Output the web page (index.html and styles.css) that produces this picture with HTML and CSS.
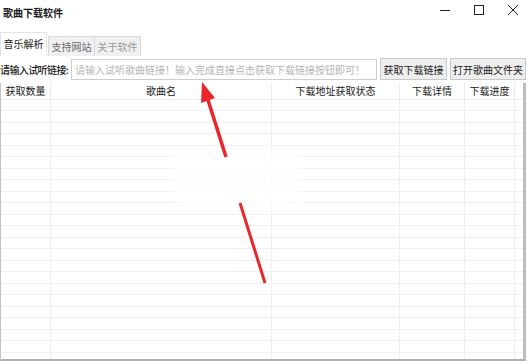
FILE: index.html
```html
<!DOCTYPE html>
<html lang="zh-CN">
<head>
    <meta charset="UTF-8">
    <title>歌曲下载软件</title>
    <link rel="stylesheet" href="styles.css">
</head>
<body>
    <div class="window">
        <div class="titlebar">
            <span class="title">歌曲下载软件</span>
            <div class="controls">
                <svg class="ctl" width="30" height="20" viewBox="0 0 30 20"><line x1="10" y1="10.5" x2="20" y2="10.5" stroke="#222" stroke-width="1"/></svg>
                <svg class="ctl" width="30" height="20" viewBox="0 0 30 20"><rect x="10.5" y="5.5" width="9" height="9" fill="none" stroke="#222" stroke-width="1"/></svg>
                <svg class="ctl" width="30" height="20" viewBox="0 0 30 20"><path d="M10 5 L20 15 M20 5 L10 15" stroke="#222" stroke-width="1"/></svg>
            </div>
        </div>

        <div class="tabs">
            <div class="tab active">音乐解析</div>
            <div class="tab">支持网站</div>
            <div class="tab dim">关于软件</div>
        </div>

        <div class="toolbar">
            <label class="label">请输入试听链接:</label>
            <input class="url" type="text" placeholder="请输入试听歌曲链接！输入完成直接点击获取下载链接按钮即可！">
            <button class="btn get">获取下载链接</button>
            <button class="btn open">打开歌曲文件夹</button>
        </div>

        <div class="grid">
            <div class="head">
                <div class="c1">获取数量</div>
                <div class="c2">歌曲名</div>
                <div class="c3">下载地址获取状态</div>
                <div class="c4">下载详情</div>
                <div class="c5">下载进度</div>
                <div class="rest"></div>
            </div>
            <div class="rows">
                <div class="c1"></div>
                <div class="c2"></div>
                <div class="c3"></div>
                <div class="c4"></div>
                <div class="c5"></div>
                <div class="rest"></div>
            </div>
        </div>

        <!-- 模糊处理的水印 -->
        <div class="smudge"></div>

        <!-- 红色指示箭头 -->
        <svg class="arrow" width="530" height="363" viewBox="0 0 530 363">
            <line x1="208" y1="100" x2="226" y2="157" stroke="#e8262a" stroke-width="3.5"/>
            <line x1="240" y1="203" x2="265" y2="283" stroke="#e8262a" stroke-width="3"/>
            <polygon points="202,82 215,98 201,103" fill="#e8262a"/>
        </svg>
    </div>
</body>
</html>
```

FILE: styles.css
```css
body {
    margin: 0;
    font-family: "Noto Sans CJK SC", "Microsoft YaHei", sans-serif;
    font-size: 10px;
    color: #1a1a1a;
    background: #fff;
    overflow: hidden;
}
.window {
    position: relative;
    width: 530px;
    height: 363px;
}
.titlebar {
    height: 24px;
    display: flex;
    align-items: center;
    padding-left: 3px;
}
.title {
    font-weight: bold;
    font-size: 10px;
}
.controls {
    margin-left: auto;
    display: flex;
    align-items: center;
    gap: 4px;
    margin-right: 2px;
    margin-top: -4px;
}
.tabs {
    margin-top: 9px;
    height: 23px;
    display: flex;
    align-items: flex-end;
}
.tab {
    width: 45px;
    height: 19px;
    line-height: 19px;
    text-align: center;
    background: #f0f0f0;
    border: 1px solid #d9d9d9;
    border-bottom: none;
    color: #6a6a6a;
    margin-left: -1px;
}
.tab.dim {
    color: #9a9a9a;
}
.tab.active {
    height: 23px;
    line-height: 22px;
    margin-left: 0;
    background: #fff;
    color: #1a1a1a;
    border-color: #e4e4e4;
    z-index: 1;
    margin-right: 2px;
}
.toolbar {
    margin-top: 1px;
    height: 24px;
    display: flex;
    align-items: center;
}
.label {
    width: 71px;
    white-space: nowrap;
    letter-spacing: -0.6px;
    font-weight: 500;
}
.url {
    box-sizing: border-box;
    width: 306px;
    height: 21px;
    border: 1px solid #cdcdcd;
    padding: 0 3px;
    font-family: inherit;
    font-size: 10px;
    outline: none;
}
.url::placeholder {
    color: #b5b5b5;
}
.btn {
    box-sizing: border-box;
    height: 22px;
    margin-left: 3px;
    padding: 0;
    background: #eeeeee;
    border: 1px solid #c9c9c9;
    font-family: inherit;
    font-size: 10px;
    color: #1a1a1a;
}
.btn.get {
    width: 67px;
}
.btn.open {
    width: 76px;
}
.grid {
    box-sizing: border-box;
    margin-top: 2px;
    width: 526px;
    height: 278px;
    border-left: 1px solid #c4c4c4;
    border-right: 3px solid #bdbdbd;
    border-bottom: 2px solid #b0b0b0;
    display: flex;
    flex-direction: column;
}
.head {
    height: 16px;
    display: flex;
    border-bottom: 1px solid #ededed;
}
.head > div {
    text-align: center;
    line-height: 15px;
    white-space: nowrap;
    border-right: 1px solid #ececec;
}
.rows {
    flex: 1;
    display: flex;
    background: repeating-linear-gradient(to bottom, #fff 0, #fff 10.5px, #f1f1f1 10.5px, #f1f1f1 11.5px);
}
.rows > div {
    border-right: 1px solid #efefef;
}
.c1 { width: 49px; }
.c2 { width: 220px; }
.c3 { width: 127px; }
.c4 { width: 64px; }
.c5 { width: 49px; }
.rest { flex: 1; border-right: none !important; }
.smudge {
    position: absolute;
    left: 175px;
    top: 150px;
    width: 125px;
    height: 55px;
    background: #fff;
    opacity: 0.8;
    filter: blur(6px);
}
.arrow {
    position: absolute;
    left: 0;
    top: 0;
    pointer-events: none;
}
```
